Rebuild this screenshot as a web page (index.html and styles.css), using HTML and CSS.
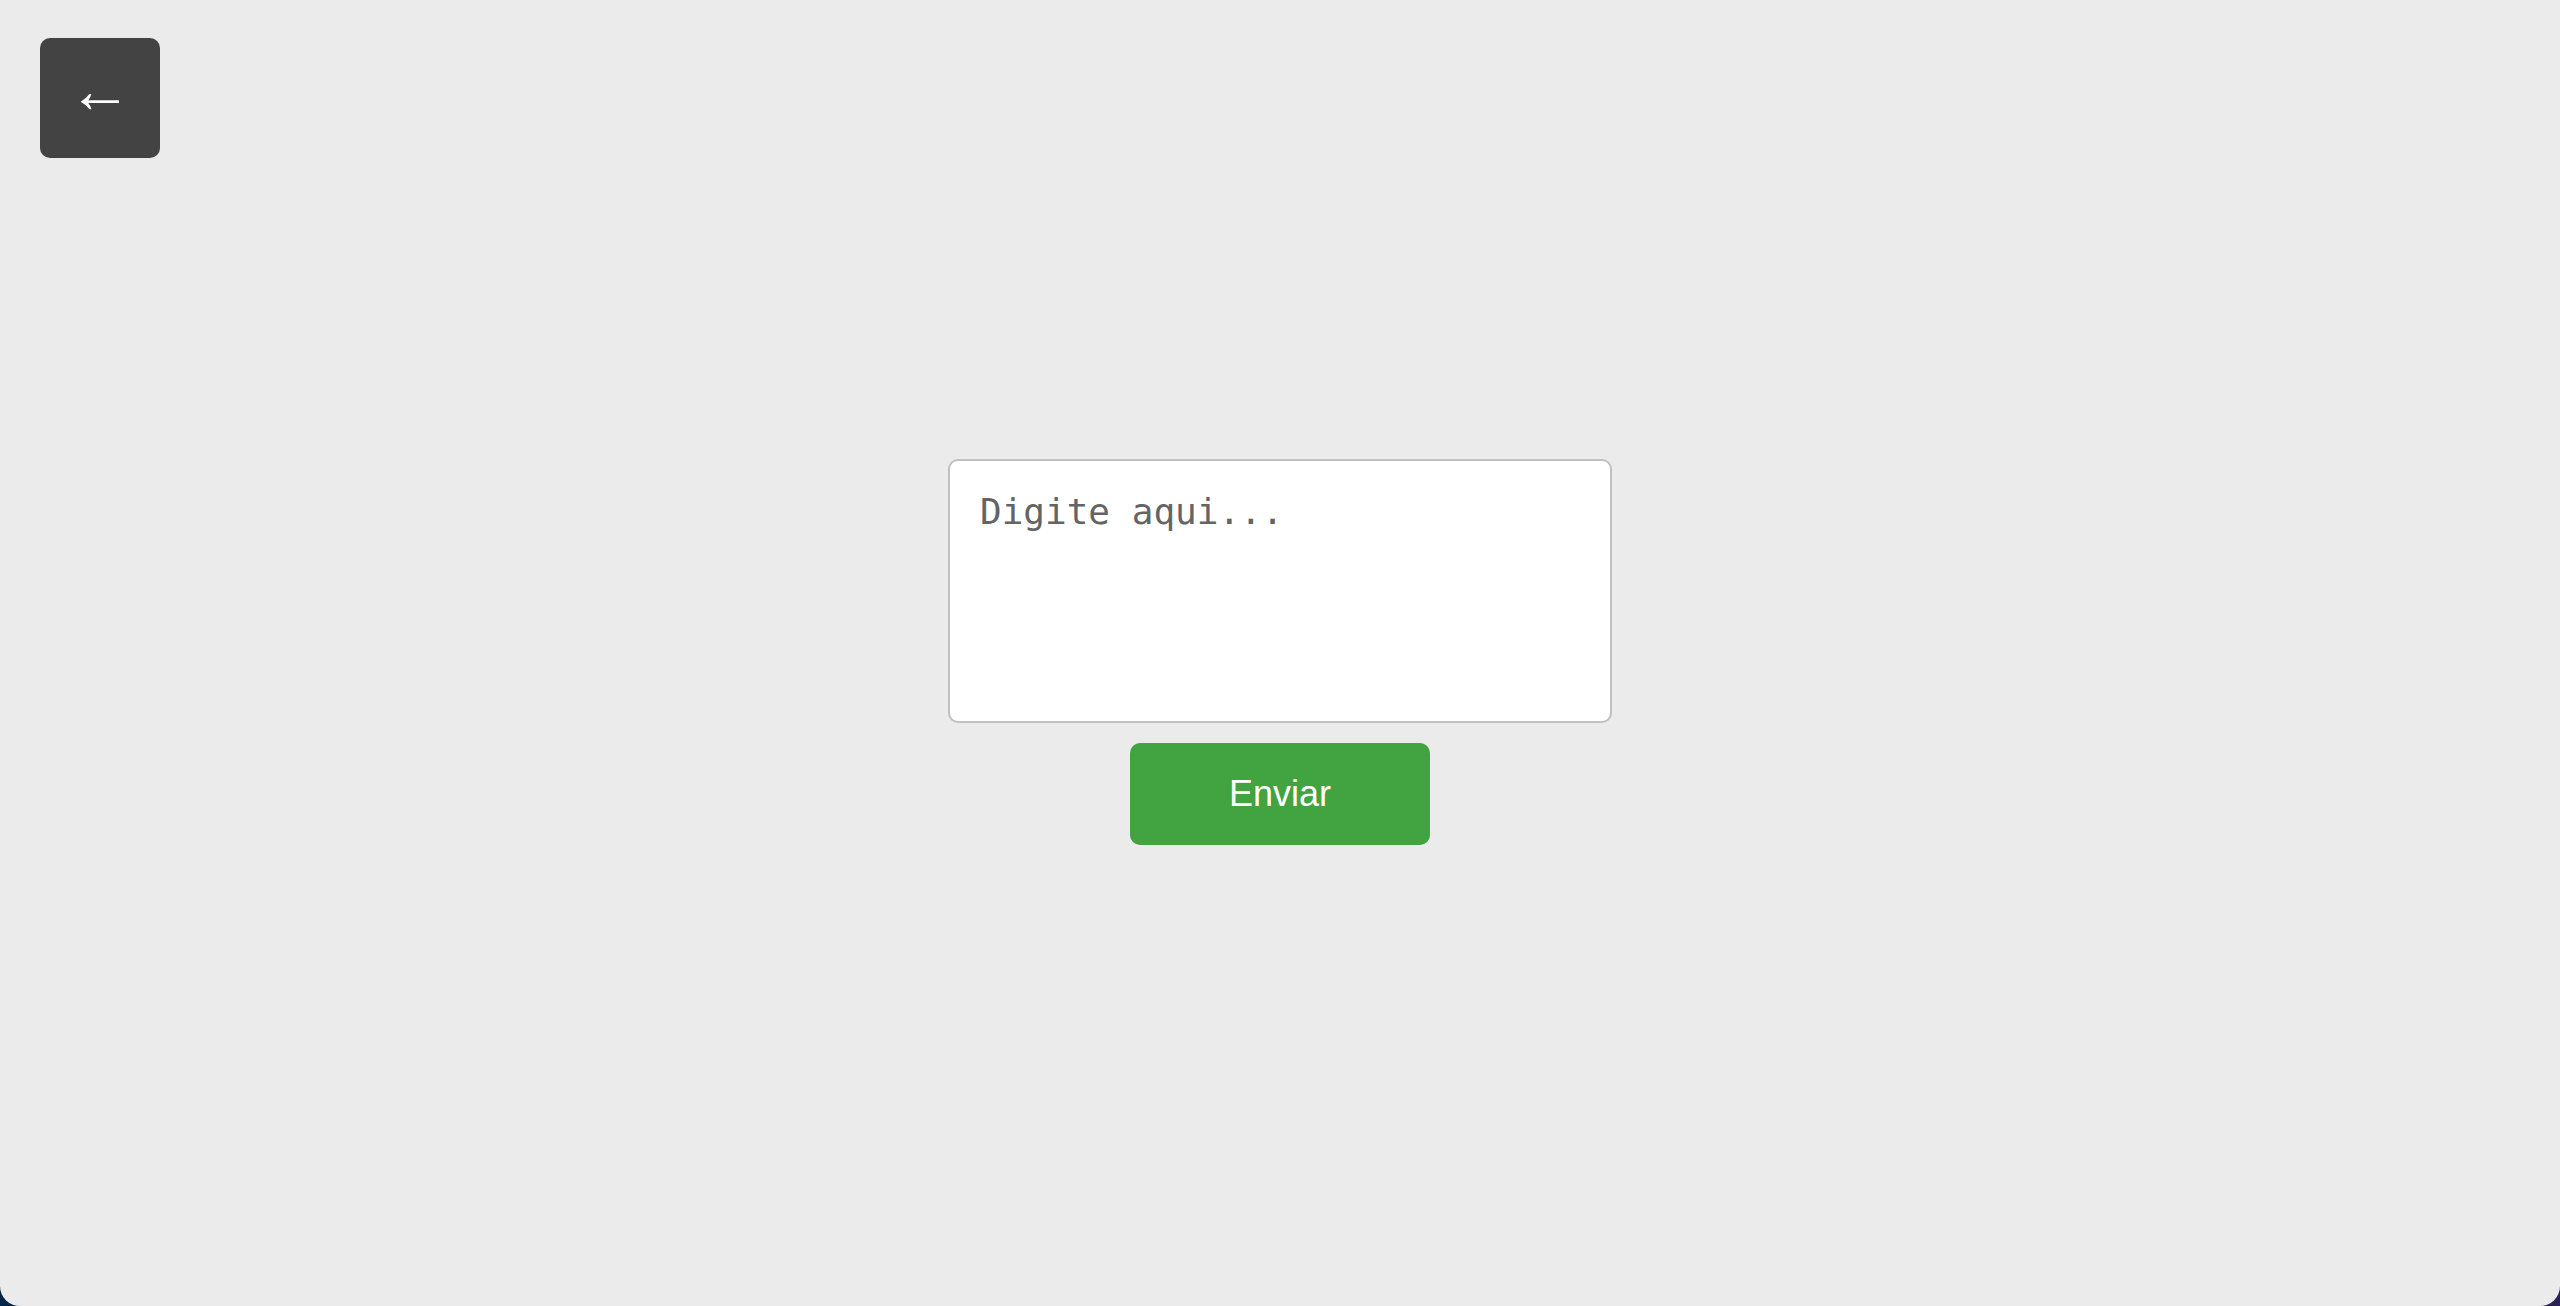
FILE: index.html
```html
<!DOCTYPE html>
<html lang="pt-BR">
<head>
<meta charset="utf-8">
<meta name="viewport" content="width=device-width, initial-scale=1">
<title>Enviar</title>
<link rel="stylesheet" href="styles.css">
</head>
<body>
<div class="window">
  <button class="back" type="button" aria-label="Voltar">
    <svg class="back-icon" viewBox="0 0 38 16" aria-hidden="true">
      <path fill="#fff" d="M0 7.500Q5 4.500 8.500 0H10.300Q9.500 3.500 7.300 6.300H38V9H7.300Q9.500 11.700 10.500 15.200H8.700Q5 10.500 0 7.900Z"/>
    </svg>
  </button>
  <form class="form">
    <textarea class="message" placeholder="Digite aqui..." aria-label="Mensagem"></textarea>
    <button class="send" type="button">Enviar</button>
  </form>
</div>
</body>
</html>
```
FILE: styles.css
```css
* {
  box-sizing: border-box;
}

body {
  margin: 0;
  background: linear-gradient(90deg, #062348, #2c2057);
  font-family: "Liberation Sans", Arial, sans-serif;
}

.window {
  display: grid;
  place-items: center;
  min-height: 100vh;
  background: #ebebeb;
  border-radius: 0 0 20px 20px;
}

.back {
  position: absolute;
  top: 38px;
  left: 40px;
  display: flex;
  align-items: center;
  justify-content: center;
  width: 120px;
  height: 120px;
  padding: 8px 0 0;
  border: 0;
  border-radius: 10px;
  background: #434343;
}

.back-icon {
  width: 38px;
  height: 16px;
}

.form {
  display: flex;
  flex-direction: column;
  align-items: center;
  gap: 20px;
  padding-bottom: 2px;
}

.message {
  width: 664px;
  max-width: 100%;
  height: 264px;
  padding: 30px;
  border: 2px solid #c0c0c0;
  border-radius: 10px;
  background: #fff;
  font: 36px/42px "DejaVu Sans Mono", monospace;
  resize: none;
}

.message::placeholder {
  color: #646464;
}

.send {
  width: 300px;
  padding: 30px;
  border: 0;
  border-radius: 10px;
  background: #41a441;
  color: #fff;
  font: 36px/42px "Liberation Sans", Arial, sans-serif;
}
```
